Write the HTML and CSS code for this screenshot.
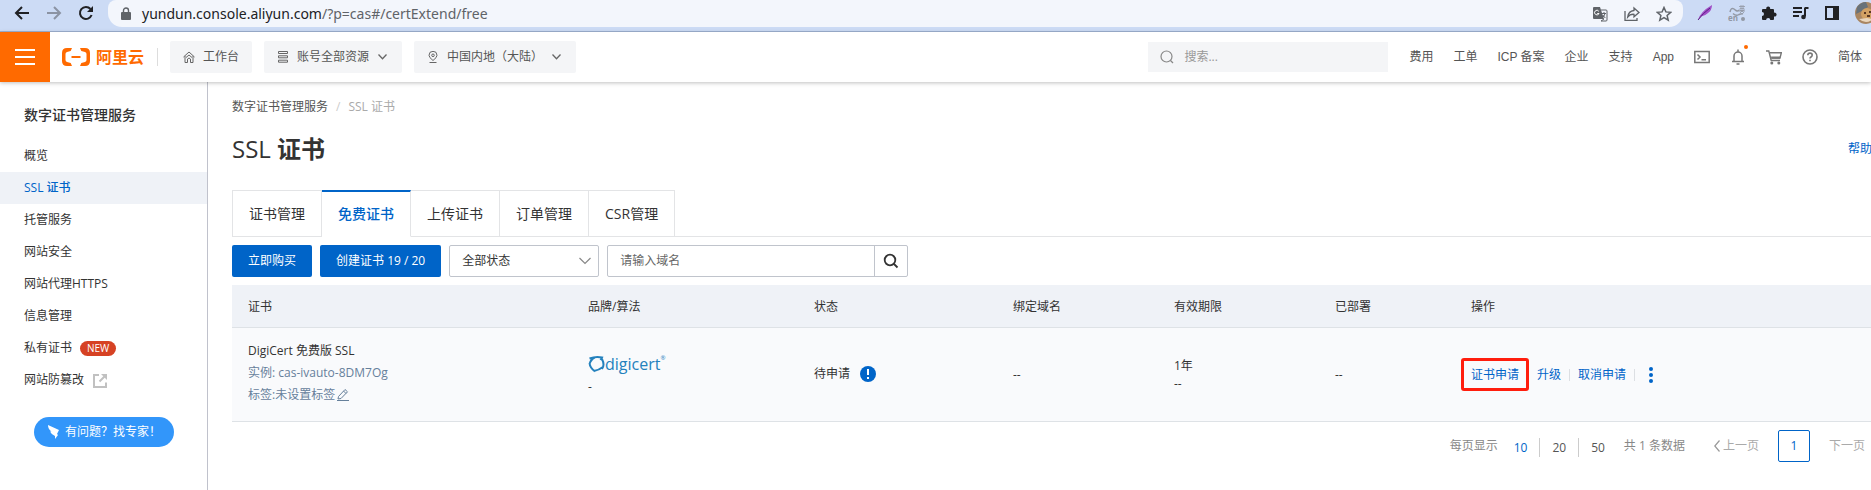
FILE: index.html
```html
<!DOCTYPE html>
<html lang="zh-CN">
<head>
<meta charset="utf-8">
<title>SSL 证书</title>
<link rel="stylesheet" href="styles.css">
</head>
<body>
<div class="browser">
  <div class="browser-nav">
    <button class="icon-btn" aria-label="后退"><svg width="16" height="16" viewBox="0 0 16 16" fill="none" stroke="#202124" stroke-width="2"><path d="M15 8H2M8 2L2 8l6 6"/></svg></button>
    <button class="icon-btn" aria-label="前进"><svg width="16" height="16" viewBox="0 0 16 16" fill="none" stroke="#8b93a3" stroke-width="2"><path d="M1 8h13M8 2l6 6-6 6"/></svg></button>
    <button class="icon-btn" aria-label="刷新"><svg width="16" height="16" viewBox="0 0 16 16" fill="none" stroke="#202124" stroke-width="2"><path d="M13.600 10A6 6 0 1 1 12.500 4"/><path d="M15 1v6H9z" fill="#202124" stroke="none"/></svg></button>
  </div>
  <div class="address">
    <svg width="10" height="14" viewBox="0 0 10 14"><path d="M1 5h8q1 0 1 1v6q0 1-1 1H1q-1 0-1-1V6q0-1 1-1z" fill="#5f6368"/><path d="M2.500 6V3.500a2.500 2.500 0 0 1 5 0V6" fill="none" stroke="#5f6368" stroke-width="1.400"/></svg>
    <span class="url"><span class="host">yundun.console.aliyun.com</span>/?p=cas#/certExtend/free</span>
    <div class="address-tools">
      <svg width="16" height="16" viewBox="0 0 16 16"><path d="M2 1h6l4 12H2q-1 0-1-1V2q0-1 1-1z" fill="#5f6368"/><path d="M9 4h5q1 0 1 1v9q0 1-1 1H9l3-2" fill="none" stroke="#5f6368"/><path d="M6.800 5.300A2.300 2.300 0 1 0 7 7.500H5.200" fill="none" stroke="#fff"/><path d="M9.500 7.500H14M12 6v1.500M13 7.500q-.5 2.500-2.500 4M10.800 9l2.500 3" fill="none" stroke="#5f6368"/></svg>
      <svg width="16" height="16" viewBox="0 0 16 16" fill="none" stroke="#5f6368" stroke-width="1.300"><path d="M1 5v9.300h12V12"/><path d="M10 2l5 4.500-5 4.300V8.300Q6 8 3.700 11 4.500 5 10 4.500z"/></svg>
      <svg width="16" height="16" viewBox="0 0 16 16" fill="none" stroke="#5f6368" stroke-width="1.500"><path d="M8 1.500l1.900 4.400 4.800.4-3.600 3.200 1.100 4.700L8 11.700l-4.200 2.500 1.100-4.700-3.600-3.200 4.800-.4z"/></svg>
    </div>
  </div>
  <div class="extensions">
    <svg width="16" height="16" viewBox="0 0 16 16"><path d="M1 15Q3 7 15 0q0 5-4 8-3 3-7 3.500z" fill="#a14fc6"/><path d="M1 15Q6 8 13 3" fill="none" stroke="#5c1f85"/></svg>
    <svg width="18" height="18" viewBox="0 0 18 18"><path d="M2 8q1-5 4-3l2 1.500q2 1 3-.5M5 9.500q3 3 6 1 3-1 4-.5" fill="none" stroke="#9298a3" stroke-width="1.500"/><path d="M11 2.500h6M13 1v3M15 1v3M12 4.500h4v2h-4zM11 7h6M14 4.500v2.500l-2 2M14 7l2 2" fill="none" stroke="#9298a3" stroke-width=".8"/><circle cx="15" cy="15" r="2" fill="#9298a3"/><text x="0" y="17" class="ext-text">en</text></svg>
    <svg width="16" height="16" viewBox="0 0 16 16"><path d="M2 4h3.300a2 2 0 1 1 3.800 0H12q1 0 1 1v2.700a2 2 0 1 1 0 3.800V14q0 1-1 1H9.300a2.100 2.100 0 0 0-4.200 0H2q-1 0-1-1v-2.900a2 2 0 0 0 0-4V5q0-1 1-1z" fill="#202124"/></svg>
    <svg width="17" height="16" viewBox="0 0 17 16"><path d="M1 3h9M1 7h9M1 11h6" fill="none" stroke="#202124" stroke-width="1.800"/><path d="M13 3v8.500M12.500 3h4" fill="none" stroke="#202124" stroke-width="2"/><circle cx="11.500" cy="12" r="2.300" fill="#202124"/></svg>
    <svg width="16" height="16" viewBox="0 0 16 16"><path d="M1 1h14v14H1zM3 3v10h6V3z" fill="#202124" fill-rule="evenodd"/></svg>
    <svg class="avatar" width="22" height="22" viewBox="0 0 22 22"><circle cx="11" cy="11" r="11" fill="#a98662"/><path d="M2 5q4-5 9-5l2 5-6 4-6 3z" fill="#68727a"/><circle cx="12" cy="12" r="6" fill="#d2a163"/><path d="M9 10h2v2H9zM14 9h2v2h-2zM12 13h3v2h-3z" fill="#5a3822"/><path d="M4 17q7 6 14 0l-6-1z" fill="#ead6bc"/></svg>
  </div>
</div>

<header class="topbar">
  <button class="menu" aria-label="菜单"><span></span><span></span><span></span></button>
  <a class="brand" href="#"><svg width="28" height="18" viewBox="0 0 28 18"><path d="M10 0H5Q0 0 0 5v8q0 5 5 5h5l-1.300-3L5 14q-1.500-.4-1.500-2V6q0-1.600 1.500-2l3.700-1zM18 0h5q5 0 5 5v8q0 5-5 5h-5l1.300-3 3.700-1q1.500-.4 1.500-2V6q0-1.600-1.500-2l-3.700-1zM9.500 8h9v2h-9z" fill="#ff6a00"/></svg><span>阿里云</span></a>
  <div class="scope">
    <button class="chip"><svg width="12" height="12" viewBox="0 0 12 12" fill="none" stroke="#666"><path d="M.5 6L6 1l5.500 5M2 5v6.500h2.500V8q1.500-2 3 0v3.500H10V5M3 6.500L6 4l3 2.500"/></svg>工作台</button>
    <button class="chip"><svg width="12" height="12" viewBox="0 0 12 12" fill="none" stroke="#666"><path d="M1.500.5h9v2h-9zM1.500 4.800h9v2h-9zM1.500 9.200h9v2h-9z"/></svg>账号全部资源<svg class="caret" width="9" height="6" viewBox="0 0 9 6"><path d="M.5.500l4 4.200 4-4.200" fill="none" stroke="#666" stroke-width="1.300"/></svg></button>
    <button class="chip"><svg width="12" height="12" viewBox="0 0 12 12" fill="none" stroke="#666"><path d="M6 9.500Q2 6.500 2 4.300a4 4 0 0 1 8 0Q10 6.500 6 9.500zM2.500 11.500h7"/><circle cx="6" cy="4.300" r="1.300"/></svg>中国内地（大陆）<svg class="caret" width="9" height="6" viewBox="0 0 9 6"><path d="M.5.500l4 4.200 4-4.200" fill="none" stroke="#666" stroke-width="1.300"/></svg></button>
  </div>
  <label class="top-search"><svg width="14" height="14" viewBox="0 0 14 14" fill="none" stroke="#888" stroke-width="1.200"><circle cx="6.500" cy="6.500" r="5.500"/><path d="M10.500 10.500l2.500 2.500"/></svg><input type="search" placeholder="搜索..." aria-label="搜索"></label>
  <nav class="top-nav">
    <a href="#">费用</a><a href="#">工单</a><a href="#">ICP 备案</a><a href="#">企业</a><a href="#">支持</a><a href="#">App</a>
    <button class="icon-btn" aria-label="终端"><svg width="16" height="16" viewBox="0 0 16 16" fill="none" stroke="#777" stroke-width="1.500"><path d="M.8 2.500h14.400v11H.8zM3.500 5.500L6 8l-2.500 2.500M7.500 10.800h4.500"/></svg></button>
    <button class="icon-btn bell" aria-label="通知"><svg width="16" height="16" viewBox="0 0 16 16" fill="none" stroke="#777" stroke-width="1.500"><path d="M2 12.500h12M4 12.500V7a4 4 0 0 1 8 0v5.500M8 .5v2M6.500 15h3"/></svg><i></i></button>
    <button class="icon-btn" aria-label="购物车"><svg width="16" height="16" viewBox="0 0 16 16"><path d="M0 2h2.800l2.400 9.500H14" fill="none" stroke="#777" stroke-width="1.400"/><path d="M4 3.800h11.300L14 9H5.200" fill="none" stroke="#777" stroke-width="1.400"/><path d="M5 7.500h9.500L14 9.700H5.500z" fill="#777"/><circle cx="5.800" cy="14" r="1.500" fill="#777"/><circle cx="12.800" cy="14" r="1.500" fill="#777"/></svg></button>
    <button class="icon-btn" aria-label="帮助"><svg width="16" height="16" viewBox="0 0 16 16" fill="none" stroke="#777" stroke-width="1.600"><circle cx="8" cy="8" r="7"/><path d="M5.800 6.300q0-2.200 2.200-2.200t2.200 2q0 1.200-1.200 1.900-1 .6-1 1.600M8 10.700v1.500"/></svg></button>
    <a href="#">简体</a>
  </nav>
</header>

<div class="layout">
  <aside class="sidebar">
    <h2>数字证书管理服务</h2>
    <nav class="side-nav">
      <a href="#">概览</a>
      <a href="#" class="current">SSL 证书</a>
      <a href="#">托管服务</a>
      <a href="#">网站安全</a>
      <a href="#">网站代理HTTPS</a>
      <a href="#">信息管理</a>
      <a href="#">私有证书<span class="new">NEW</span></a>
      <a href="#">网站防篡改<svg width="16" height="16" viewBox="0 0 16 16" fill="none" stroke="#c1c1c1" stroke-width="2"><path d="M7 2H2v12h12V9.500M7.500 8.500L13 3"/><path d="M9 1h6v6z" fill="#c1c1c1" stroke="none"/></svg></a>
    </nav>
    <button class="expert"><svg width="14" height="16" viewBox="0 0 14 16"><path d="M1 1l11 5-2 4 1 1-3 4 0-3Q4 10 3 7.500l1.500 0Q1 5 1 1z" fill="#fff"/></svg>有问题？找专家！</button>
  </aside>

  <main class="content">
    <div class="crumbs"><a href="#">数字证书管理服务</a><span class="slash">/</span><span>SSL 证书</span></div>
    <div class="heading"><h1><span>SSL</span> 证书</h1><a href="#">帮助</a></div>
    <div class="tabs" role="tablist">
      <button role="tab">证书管理</button><button role="tab" class="on" aria-selected="true">免费证书</button><button role="tab">上传证书</button><button role="tab">订单管理</button><button role="tab">CSR管理</button>
    </div>
    <div class="filters">
      <button class="primary">立即购买</button>
      <button class="primary">创建证书 19 / 20</button>
      <div class="select"><select aria-label="状态"><option>全部状态</option></select><svg width="12" height="8" viewBox="0 0 12 8"><path d="M.5 1L6 6.500 11.500 1" fill="none" stroke="#888" stroke-width="1.200"/></svg></div>
      <div class="domain"><input type="text" placeholder="请输入域名" aria-label="域名"><button aria-label="搜索域名"><svg width="16" height="16" viewBox="0 0 16 16" fill="none" stroke="#333" stroke-width="1.800"><circle cx="7" cy="7" r="5.300"/><path d="M11 11l3.500 3.500"/></svg></button></div>
    </div>
    <table class="certs">
      <colgroup><col class="c-cert"><col class="c-brand"><col class="c-state"><col class="c-domain"><col class="c-term"><col class="c-deploy"><col></colgroup>
      <thead><tr><th>证书</th><th>品牌/算法</th><th>状态</th><th>绑定域名</th><th>有效期限</th><th>已部署</th><th>操作</th></tr></thead>
      <tbody><tr>
        <td><div class="cert"><span>DigiCert 免费版 SSL</span><span class="muted">实例: cas-ivauto-8DM7Og</span><span class="muted">标签:未设置标签 <svg width="12" height="13" viewBox="0 0 12 13" fill="none" stroke="#66809b"><path d="M1.500 8.500L8 1.500l2.500 2.300L4 10.500l-3 .5zM6.500 3L9 5.500M0 12.500h12"/></svg></span></div></td>
        <td><div class="brand-cell"><span class="digicert"><svg width="17" height="18" viewBox="0 0 17 18" fill="none" stroke="#2481bd" stroke-width="2"><path d="M1.500 3.500Q8 1 14 2.500L12.500 5M14 4q3 6 0 10M15 12q-4 3-9 4M7 16.500Q2 13 1.500 8M1.500 9Q3 4 7 2.500"/></svg>digicert<sup>®</sup></span><span>-</span></div></td>
        <td><div class="state">待申请<svg width="16" height="16" viewBox="0 0 16 16"><circle cx="8" cy="8" r="8" fill="#0064c8"/><path d="M8 3v6M8 11v2" stroke="#fff" stroke-width="2"/></svg></div></td>
        <td>--</td>
        <td>1年<br>--</td>
        <td>--</td>
        <td><div class="actions"><a href="#" class="marked">证书申请</a><a href="#">升级</a><i></i><a href="#">取消申请</a><i></i><button class="icon-btn" aria-label="更多"><svg width="4" height="16" viewBox="0 0 4 16" fill="#0064c8"><circle cx="2" cy="2" r="2"/><circle cx="2" cy="8" r="2"/><circle cx="2" cy="14" r="2"/></svg></button></div></td>
      </tr></tbody>
    </table>
    <div class="pager">
      <span class="label">每页显示</span>
      <div class="sizes"><a href="#" class="on">10</a><a href="#">20</a><a href="#">50</a></div>
      <span class="total">共 1 条数据</span>
      <button class="step"><svg width="6" height="12" viewBox="0 0 6 12"><path d="M5.500.5L.8 6l4.700 5.500" fill="none" stroke="#999" stroke-width="1.200"/></svg>上一页</button>
      <button class="page">1</button>
      <button class="step">下一页</button>
    </div>
  </main>
</div>
</body>
</html>
```
FILE: styles.css
```css
* { box-sizing: border-box; }
body {
  margin: 0;
  min-height: 100vh;
  display: flex;
  flex-direction: column;
  overflow-x: hidden;
  background: #fff;
  color: #333;
  font: 12px/18px "Open Sans", "Noto Sans CJK SC", sans-serif;
}
a { color: inherit; text-decoration: none; }
button, input, select { font: inherit; color: inherit; margin: 0; }
button { border: 0; padding: 0; background: none; cursor: pointer; }
svg { display: block; flex: none; }
.icon-btn { display: flex; align-items: center; justify-content: center; }

.browser {
  display: flex;
  align-items: flex-start;
  height: 32px;
  overflow: hidden;
  background: #ccdbf5;
  border-bottom: 1px solid #9fb2d2;
}
.browser-nav { display: flex; gap: 16px; padding: 5px 14px 0; }
.address {
  flex: 1;
  display: flex;
  align-items: center;
  gap: 11px;
  height: 27px;
  padding: 0 11px 0 13px;
  border-radius: 8px 8px 14px 14px;
  background: #f3f6fc;
}
.url { flex: 1; font-family: "Noto Sans", sans-serif; font-size: 14px; color: #5f6368; white-space: nowrap; }
.host { color: #202124; }
.address-tools { display: flex; gap: 16px; }
.extensions { display: flex; align-items: center; gap: 15px; height: 26px; margin-right: -6px; padding-left: 14px; }
.ext-text { font: bold 8px "Open Sans", sans-serif; fill: #9298a3; }

.topbar {
  position: relative;
  display: flex;
  align-items: center;
  height: 50px;
  padding-right: 9px;
  background: #fff;
  box-shadow: 0 1px 4px rgba(0, 0, 0, .25);
  color: #555;
}
.menu {
  display: flex;
  flex-direction: column;
  align-items: center;
  justify-content: center;
  gap: 5px;
  width: 50px;
  height: 50px;
  background: #ff6a00;
}
.menu span { width: 20px; height: 2px; background: #fff; }
.brand {
  display: flex;
  align-items: center;
  gap: 6px;
  height: 18px;
  margin-left: 12px;
  padding-right: 13px;
  border-right: 1px solid #ddd;
  color: #ff6a00;
  font-size: 16px;
  font-weight: 700;
}
.scope { display: flex; gap: 12px; margin-left: 12px; }
.chip {
  display: flex;
  align-items: center;
  gap: 8px;
  height: 32px;
  padding: 0 13px;
  border-radius: 2px;
  background: #f4f5f7;
  white-space: nowrap;
}
.caret { margin: 0 2px 0 1px; }
.top-search {
  display: flex;
  align-items: center;
  gap: 10px;
  width: 240px;
  height: 30px;
  margin-left: auto;
  padding: 0 12px;
  background: #f4f5f7;
}
.top-search input { width: 100%; padding: 0; border: 0; outline: 0; background: none; }
.top-search input::placeholder { color: #999; opacity: 1; }
.top-nav {
  display: flex;
  align-items: center;
  gap: 20px;
  margin-left: 21px;
  white-space: nowrap;
  font-family: "Liberation Sans", "Noto Sans CJK SC", sans-serif;
}
.bell { position: relative; }
.bell i { position: absolute; top: -4px; right: -2px; width: 4px; height: 4px; border-radius: 50%; background: #ff6a00; }

.layout { flex: 1; display: flex; }
.sidebar { flex: none; width: 208px; padding-top: 23px; border-right: 1px solid #c0c2cc; }
.sidebar h2 { margin: 0; padding: 0 24px; font-size: 14px; line-height: 20px; font-weight: 500; }
.side-nav { display: flex; flex-direction: column; margin-top: 15px; }
.side-nav a { display: flex; align-items: center; height: 32px; padding: 0 24px; }
.side-nav svg { margin: 2px 0 0 8px; }
.side-nav .current { background: #eff2f7; color: #0064c8; font-weight: 500; }
.new {
  margin-left: 8px;
  padding: 0 7px;
  border-radius: 8px;
  background: #d64224;
  color: #fff;
  font-size: 10px;
  line-height: 15px;
  font-weight: 500;
}
.expert {
  display: flex;
  align-items: center;
  gap: 4px;
  width: 140px;
  height: 30px;
  margin: 21px 0 0 34px;
  padding-left: 13px;
  border-radius: 15px;
  background: #3296fa;
  color: #fff;
  white-space: nowrap;
}

.content { flex: 1; min-width: 0; padding: 16px 0 0 24px; }
.crumbs { display: flex; gap: 8px; color: #aaa; }
.crumbs a { color: #555; }
.slash { color: #ccc; }
.heading { display: flex; align-items: center; justify-content: space-between; height: 32px; margin-top: 17px; }
.heading h1 { margin: 0; font-size: 24px; line-height: 32px; font-weight: 700; }
.heading h1 span { font-weight: 500; }
.heading a { margin-right: -1px; color: #0064c8; }
.tabs { display: flex; height: 47px; margin-top: 25px; }
.tabs::after { content: ""; flex: 1; border-bottom: 1px solid #e3e4e6; }
.tabs button {
  padding: 0 16px;
  border: 1px solid #e3e4e6;
  border-left-width: 0;
  font-size: 14px;
  line-height: 20px;
}
.tabs button:first-child { border-left-width: 1px; }
.tabs .on { border-top: 2px solid #0064c8; border-bottom-color: transparent; color: #0064c8; font-weight: 500; }
.filters { display: flex; gap: 8px; height: 32px; margin-top: 8px; }
.primary { padding: 0 16px; border-radius: 2px; background: #0064c8; color: #fff; }
.select { display: grid; align-items: center; width: 150px; }
.select select {
  grid-area: 1 / 1;
  width: 100%;
  height: 32px;
  padding: 0 12px;
  border: 1px solid #c0c4cc;
  border-radius: 2px;
  background: #fff;
  appearance: none;
}
.select svg { grid-area: 1 / 1; justify-self: end; margin-right: 8px; pointer-events: none; }
.domain { display: flex; width: 301px; border: 1px solid #c0c4cc; border-radius: 2px; }
.domain input { flex: 1; min-width: 0; padding: 0 12px; border: 0; outline: 0; background: none; }
.domain input::placeholder { color: #666; opacity: 1; }
.domain button { display: flex; align-items: center; justify-content: center; width: 33px; border-left: 1px solid #c0c4cc; }

.certs { width: 100%; margin-top: 8px; border-collapse: separate; border-spacing: 0; table-layout: fixed; }
.c-cert { width: 340px; }
.c-brand { width: 226px; }
.c-state { width: 199px; }
.c-domain, .c-term { width: 161px; }
.c-deploy { width: 136px; }
.certs th, .certs td { padding: 0 16px; border-bottom: 1px solid #dee2e6; text-align: left; font-weight: 400; }
.certs th { height: 43px; padding-top: 2px; background: #eff2f7; }
.certs td { height: 94px; background: #f9fafc; }
.cert { display: flex; flex-direction: column; gap: 4px; padding-bottom: 4px; }
.muted { display: flex; align-items: center; gap: 2px; color: #66809b; }
.brand-cell { display: flex; flex-direction: column; gap: 4px; }
.digicert { display: flex; align-items: center; color: #2481bd; font-size: 16px; line-height: 20px; font-weight: 500; }
.digicert sup { align-self: flex-start; font-size: 6px; line-height: 8px; }
.state { display: flex; align-items: center; gap: 10px; padding-bottom: 2px; }
.actions { display: flex; align-items: center; gap: 8px; margin-left: -10px; color: #0064c8; white-space: nowrap; }
.actions i { width: 1px; height: 12px; background: #dcdfe3; }
.actions .icon-btn { margin-left: 6px; }
.marked { padding: 5px 7px 4px; border: 3px solid #ff1d0d; border-radius: 3px; line-height: 18px; }

.pager { display: flex; align-items: center; justify-content: flex-end; height: 32px; margin-top: 8px; padding-right: 6px; color: #888; white-space: nowrap; }
.sizes { display: flex; margin: 0 19px 0 4px; padding-top: 2px; }
.sizes a { padding: 1px 12px 0; color: #555; }
.sizes a + a { border-left: 1px solid #ccc; }
.sizes a:last-child { padding-right: 0; }
.sizes .on { color: #0064c8; }
.step { display: flex; align-items: center; gap: 3px; color: #aaa; }
.total { margin-right: 29px; }
.page { width: 32px; height: 32px; margin: 0 19px; border: 1px solid #0064c8; border-radius: 2px; color: #0064c8; }
```
